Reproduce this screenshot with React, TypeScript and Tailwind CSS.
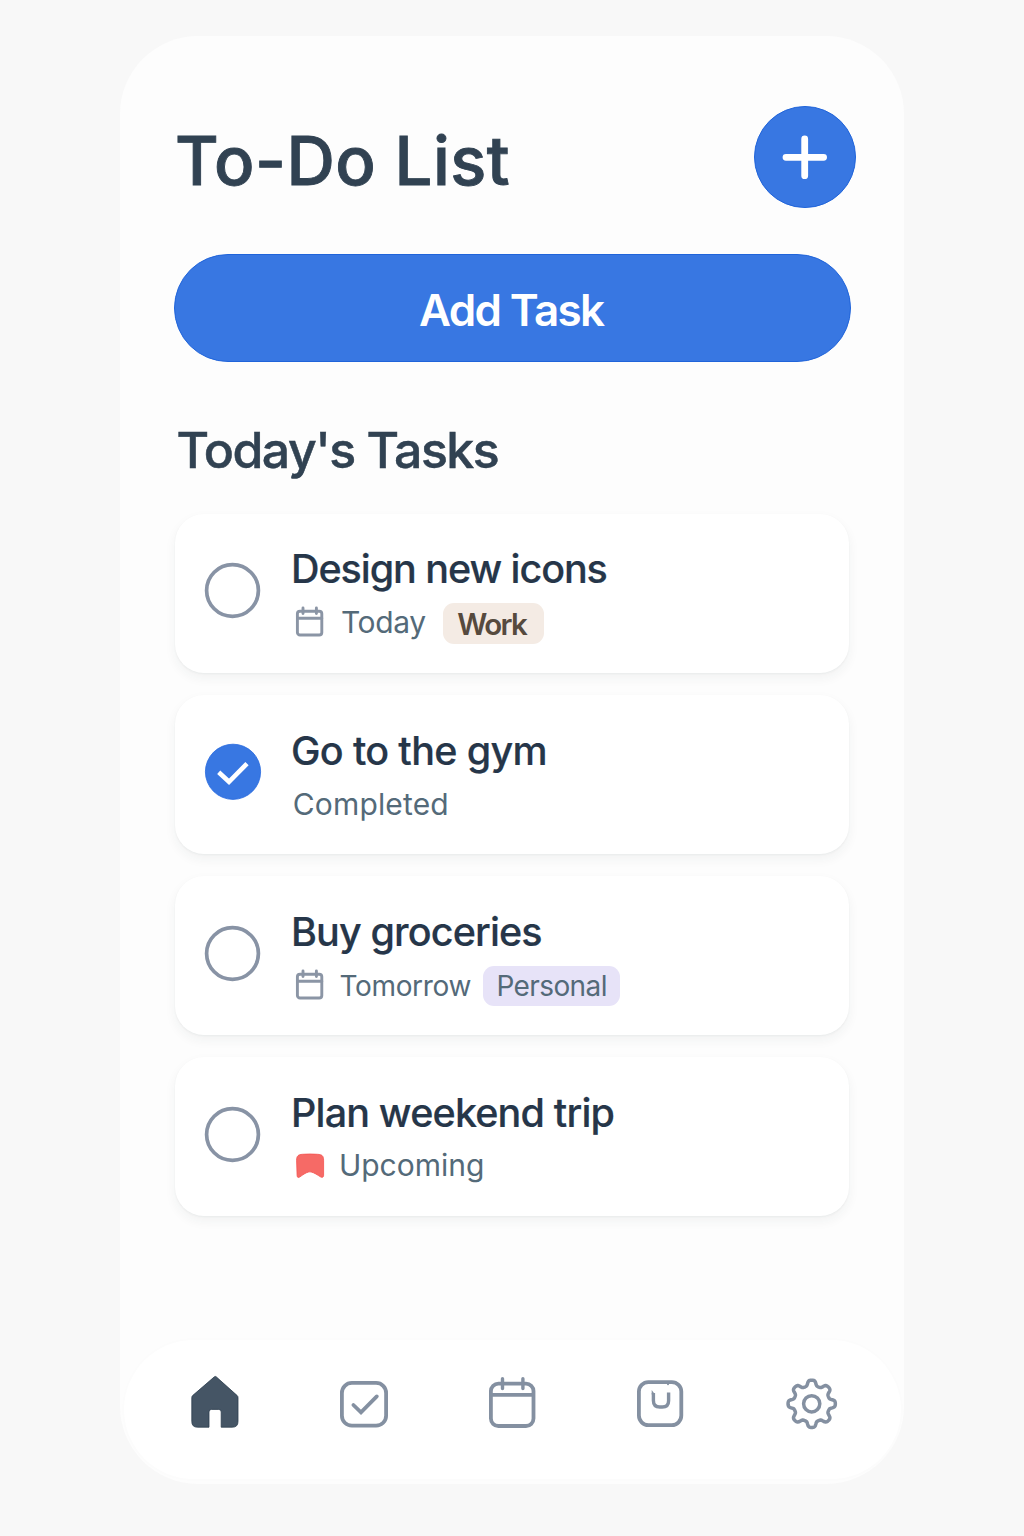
import type { ReactNode } from "react";

type Task = {
  title: string;
  titleClass: string;
  done?: boolean;
  detail: ReactNode;
};

function SmallCalendar() {
  return (
    <svg width="30" height="32" viewBox="0 0 30 32" fill="none" stroke="#8b95a5" strokeWidth="2.9" strokeLinecap="round" className="mb-[2px] ml-[3.5px] shrink-0">
      <rect x="2.4" y="5.2" width="24.4" height="23.8" rx="2.6" />
      <path d="M2.4 12.2H26.8M8 2V7.6M21.4 2V7.6" />
    </svg>
  );
}

function FlagIcon() {
  return (
    <svg width="30" height="26" viewBox="0 0 30 26" className="mb-[2px] ml-[3.7px] shrink-0">
      <path
        d="M1.6 7.2C1.6 2.8 3.4 1.6 7.4 1.3C12 .9 18 .9 22.6 1.3C27 1.6 28.6 2.8 28.6 7.2V22.4C28.6 24.4 27 24.8 25.4 23.8C22.6 22 19 19.6 16.2 19C15.2 18.8 14.6 18.8 13.6 19C10.8 19.6 7.6 22 5 23.8C3.4 25 2.1 24.6 2.1 22.6Z"
        fill="#f66a66"
        stroke="#f4524f"
        strokeWidth=".8"
      />
    </svg>
  );
}

function Checkbox({ done }: { done?: boolean }) {
  return (
    <svg width="58" height="58" viewBox="0 0 58 58" fill="none" className="shrink-0">
      {done ? (
        <>
          <circle cx="29" cy="28.8" r="27.6" fill="#3877e2" stroke="#2668de" strokeWidth=".8" />
          <path d="M14.7 29.2L25 38.8L43 20.6" stroke="#fff" strokeWidth="4.6" />
        </>
      ) : (
        <circle cx="28.5" cy="28.5" r="25.9" stroke="#8893a5" strokeWidth="3.7" />
      )}
    </svg>
  );
}

const tasks: Task[] = [
  {
    title: "Design new icons",
    titleClass: "tracking-[-1.07px]",
    detail: (
      <>
        <SmallCalendar />
        <span className="mb-[2px] ml-[16.5px] tracking-[-0.4px]">Today</span>
        <span className="ml-[17.5px] flex h-[40.5px] w-[101.3px] items-center justify-center rounded-[11px] bg-[#f4ebe4] pt-[2px] pr-[4px] text-[29.5px] font-semibold tracking-[-1.65px] text-[#564a3e]">
          Work
        </span>
      </>
    ),
  },
  {
    title: "Go to the gym",
    titleClass: "pt-px tracking-[-0.67px]",
    done: true,
    detail: <span className="mb-[2px] ml-[1.8px] tracking-[0.15px]">Completed</span>,
  },
  {
    title: "Buy groceries",
    titleClass: "pt-px tracking-[-0.87px]",
    detail: (
      <>
        <SmallCalendar />
        <span className="ml-[15px] text-[28px] tracking-[-0.35px]">Tomorrow</span>
        <span className="ml-[12.3px] flex h-10 w-[136.8px] items-center justify-center rounded-[11px] bg-[#e7e3f8] text-[28px] tracking-[-0.6px]">
          Personal
        </span>
      </>
    ),
  },
  {
    title: "Plan weekend trip",
    titleClass: "pt-px tracking-[-0.83px]",
    detail: (
      <>
        <FlagIcon />
        <span className="mb-[4px] ml-[14.2px]">Upcoming</span>
      </>
    ),
  },
];

function TaskCard({ task }: { task: Task }) {
  return (
    <li className="flex h-[159.2px] rounded-[29px] bg-white pl-[29px] shadow-[0_5px_12px_rgba(40,50,60,0.055),0_1px_2px_rgba(40,50,60,0.05)]">
      <div className="pt-[48.8px]">
        <Checkbox done={task.done} />
      </div>
      <div className="ml-[29px] pt-[31.4px]">
        <h3 className={`h-12 text-[39.5px] leading-[48px] font-medium whitespace-nowrap text-[#263649] [-webkit-text-stroke:0.2px_#263649] ${task.titleClass}`}>
          {task.title}
        </h3>
        <div className="mt-[10.5px] flex h-10 items-center text-[30px] leading-10 whitespace-nowrap text-[#546a79]">
          {task.detail}
        </div>
      </div>
    </li>
  );
}

// Eight rounded teeth: the radius swings between two values around the circle.
const gearPath =
  Array.from({ length: 192 }, (_, i) => {
    const a = (i / 192) * Math.PI * 2;
    const r = 20.9 + 2.9 * Math.tanh(1.8 * Math.cos(8 * a));
    return `${i ? "L" : "M"}${(27 + r * Math.cos(a)).toFixed(2)} ${(27 + r * Math.sin(a)).toFixed(2)}`;
  }).join("") + "Z";

function NavBar() {
  return (
    <nav className="mx-auto mb-[5px] flex h-[139px] w-[777px] justify-between rounded-[70px] bg-white pt-[34px] pr-[62px] pl-[63px] shadow-[0_0_5px_rgba(0,0,0,0.015)]">
      <svg width="54" height="56" viewBox="-0.8 0 54 56">
        <path
          d="M26.6 2.8Q27.5 2 28.4 2.8L49.4 21.6Q50.2 22.4 50.2 23.6V47.5Q50.2 53.2 44.6 53.2H33.4V38Q33.4 35.4 31 35.4H23.6Q21.2 35.4 21.2 38V53.2H9.6Q4 53.2 4 47.5V23.6Q4 22.4 4.8 21.6Z"
          fill="#455565"
          stroke="#2c3d4e"
          strokeWidth=".8"
        />
      </svg>
      <svg width="54" height="56" viewBox="-1 0 54 56" fill="none" stroke="#8490a1" strokeWidth="3.8">
        <rect x="4.9" y="8.9" width="44.2" height="42.8" rx="10" />
        <path d="M16.4 31L24 38.4L39.8 22.4" strokeLinecap="round" />
      </svg>
      <svg width="54" height="56" viewBox="0.7 0 54 56" fill="none" stroke="#8490a1" strokeWidth="3.8">
        <rect x="5.6" y="9.6" width="42.6" height="42.4" rx="7.5" />
        <path d="M5.6 20.8H48.2" />
        <path d="M17.2 4.8V14.5M37.6 4.8V14.5" strokeLinecap="round" strokeWidth="3.4" />
      </svg>
      <svg width="54" height="56" viewBox="2 0 54 56" fill="none" stroke="#8490a1" strokeWidth="3.8">
        <rect x="5.9" y="8.1" width="42.4" height="43" rx="9.5" />
        <path d="M20.4 19V26.5Q20.4 33 26.8 33H29.3Q35.6 33 35.6 26.8V18.5" strokeWidth="3.4" />
        <path d="M18.7 16L22.1 20.5H18.7Z" fill="#8490a1" stroke="none" />
        <circle cx="35" cy="10.3" r="1" fill="#8490a1" stroke="none" />
      </svg>
      <svg width="54" height="56" viewBox="0.3 -2.8 54 56" fill="none" stroke="#8490a1" strokeWidth="3.5" strokeLinejoin="round">
        <path d={gearPath} />
        <circle cx="27" cy="27" r="8.1" />
      </svg>
    </nav>
  );
}

export default function App() {
  return (
    <div className="flex h-[1536px] w-[1024px] justify-center bg-[#f8f8f8] pt-[36px] font-['Inter',sans-serif]">
      <main className="flex h-[1448px] w-[784px] flex-col rounded-[78px] bg-[#fdfdfd]">
        <header className="flex h-[172px] items-start justify-between pt-[69px] pr-[48px] pl-[55px]">
          <h1 className="mt-[16px] h-20 text-[67px] leading-[80px] font-medium tracking-[0.48px] whitespace-nowrap text-[#314252] [-webkit-text-stroke:0.9px_#314252]">
            To-Do List
          </h1>
          <button className="mt-px flex size-[102px] items-center justify-center rounded-full border border-[#2064da] bg-[#3877e2]">
            <svg width="46" height="46" viewBox="0 0 46 46" stroke="#fff" strokeWidth="6.8" strokeLinecap="round">
              <path d="M4 23.3H41.6M22.7 4.9V41.7" />
            </svg>
          </button>
        </header>
        <button className="mt-[46px] ml-[54px] flex h-[108px] w-[676.5px] items-center justify-center rounded-full border border-[#2064da] bg-[#3877e2] pt-[4px] pr-[2px] text-[44px] leading-[54px] font-semibold tracking-[-1.65px] text-white">
          Add Task
        </button>
        <h2 className="mt-[57px] ml-[56.5px] h-[60px] pt-px text-[50px] leading-[60px] font-medium tracking-[-1.5px] text-[#314252] [-webkit-text-stroke:0.5px_#314252]">
          Today's Tasks
        </h2>
        <ul className="mt-[34.5px] ml-[55px] flex w-[674px] flex-col gap-[22px]">
          {tasks.map((t) => (
            <TaskCard key={t.title} task={t} />
          ))}
        </ul>
        <div className="mt-auto">
          <NavBar />
        </div>
      </main>
    </div>
  );
}
